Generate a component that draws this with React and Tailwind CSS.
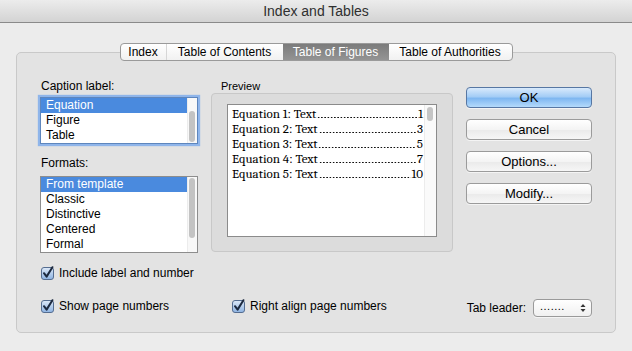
const CheckBox = () => (
  <svg width="14" height="14" viewBox="0 0 14 14" className="shrink-0">
    <defs>
      <linearGradient id="cbg" x1="0" y1="0" x2="0" y2="1">
        <stop offset="0" stopColor="#dde9f8" />
        <stop offset="1" stopColor="#8db3e2" />
      </linearGradient>
    </defs>
    <rect x="0.5" y="1.5" width="12" height="12" rx="2.5" fill="url(#cbg)" stroke="#556d90" />
    <path d="M3 7.2 L5.6 10.6 L11.4 1.2" fill="none" stroke="#1c2a40" strokeWidth="2" strokeLinecap="round" strokeLinejoin="round" />
  </svg>
);

const Check = ({ label }) => (
  <div className="flex items-center gap-[4px] text-[12px] text-black">
    <CheckBox />
    <span>{label}</span>
  </div>
);

const ListBox = ({ items, focus, height, thumbTop, thumbHeight }) => (
  <div
    className={`relative w-[158px] ${height} bg-white border overflow-hidden flex ${
      focus ? 'border-[#5e86bd] shadow-[0_0_1px_2px_#8fb5ea]' : 'border-[#8d8d8d]'
    }`}
  >
    <div className="flex-1 flex flex-col">
      {items.map((it, i) => (
        <div
          key={it}
          className={`h-[15px] leading-[15px] pl-[5px] text-[12px] ${
            i === 0 ? 'bg-[#4a8ade] text-white' : 'text-black'
          }`}
        >
          {it}
        </div>
      ))}
    </div>
    <div className="w-[10px] border-l border-[#ececec] bg-[#f8f8f8] relative">
      <div className={`absolute left-[1px] w-[6px] rounded-full bg-[#c3c3c3] ${thumbTop} ${thumbHeight}`} />
    </div>
  </div>
);

const Button = ({ label, primary }) => (
  <div
    className={`h-[21px] w-[126px] rounded-[4px] border flex items-center justify-center text-[13px] text-black shadow-[0_1px_0_rgba(255,255,255,0.6)] ${
      primary
        ? 'border-[#5777a3] bg-[linear-gradient(to_bottom,#d9eafc,#a4cdf6_45%,#7fb7f1_55%,#b4dafb)]'
        : 'border-[#9b9b9b] bg-[linear-gradient(to_bottom,#ffffff,#f4f4f4_50%,#ebebeb_55%,#f6f6f6)]'
    }`}
  >
    {label}
  </div>
);

const previewRows = [
  ['Equation 1: Text', '1'],
  ['Equation 2: Text', '3'],
  ['Equation 3: Text', '5'],
  ['Equation 4: Text', '7'],
  ['Equation 5: Text', '10'],
];

export default function App() {
  return (
    <div
      className="w-[632px] h-[351px] bg-[#ececec] overflow-hidden"
      style={{ fontFamily: '"Lucida Grande", "Liberation Sans", Arial, sans-serif' }}
    >
      {/* title bar */}
      <div className="h-[23px] border-b border-[#8a8a8a] bg-[linear-gradient(to_bottom,#ececec,#d3d3d3)] flex items-center justify-center text-[14px] text-[#2f2f2f]">
        Index and Tables
      </div>

      <div className="px-[16px] pt-[20px]">
        {/* tabs */}
        <div className="relative z-10 flex justify-center mb-[-9px]">
          <div className="flex h-[18px] rounded-[4px] border border-[#9a9a9a] bg-[linear-gradient(to_bottom,#ffffff,#f1f1f1)] overflow-hidden text-[12px] text-black">
            <div className="w-[46px] flex items-center justify-center border-r border-[#d6d6d6]">Index</div>
            <div className="w-[116px] flex items-center justify-center">Table of Contents</div>
            <div className="w-[106px] flex items-center justify-center text-white bg-[linear-gradient(to_bottom,#7c7c7c,#949494)]">
              Table of Figures
            </div>
            <div className="w-[123px] flex items-center justify-center">Table of Authorities</div>
          </div>
        </div>

        {/* panel */}
        <div className="h-[281px] rounded-[5px] border border-[#c9c9c9] bg-[#e3e3e3] pt-[26px] pl-[23px] pr-[23px]">
          <div className="flex gap-[13px]">
            {/* left column */}
            <div className="w-[158px] flex flex-col">
              <div className="h-[15px] leading-[15px] pl-[1px] text-[12px] text-black">Caption label:</div>
              <div className="mt-[3px]">
                <ListBox
                  items={['Equation', 'Figure', 'Table']}
                  focus
                  height="h-[47px]"
                  thumbTop="top-[13px]"
                  thumbHeight="h-[31px]"
                />
              </div>
              <div className="mt-[12px] h-[15px] leading-[15px] pl-[1px] text-[12px] text-black">Formats:</div>
              <div className="mt-[5px]">
                <ListBox
                  items={['From template', 'Classic', 'Distinctive', 'Centered', 'Formal']}
                  height="h-[77px]"
                  thumbTop="top-[1px]"
                  thumbHeight="h-[60px]"
                />
              </div>
              <div className="mt-[12px] h-[16px] flex items-center pl-[1px]">
                <Check label="Include label and number" />
              </div>
            </div>

            {/* preview */}
            <div className="w-[242px] flex flex-col">
              <div className="h-[14px] leading-[14px] pl-[10px] text-[11px] text-black">Preview</div>
              <div className="h-[159px] rounded-[4px] border border-[#c8c8c8] bg-[#dcdcdc] pt-[10px] px-[15px]">
                <div className="h-[133px] bg-white border border-[#8b8b8b] flex">
                  <div
                    className="flex-1 min-w-0 pl-[4px] pt-[1px] text-[13px] text-black"
                    style={{ fontFamily: 'Cambria, "Liberation Serif", "Times New Roman", serif' }}
                  >
                    {previewRows.map(([t, n]) => (
                      <div key={t} className="flex h-[15px] leading-[15px]">
                        <span className="whitespace-nowrap shrink-0">{t}</span>
                        <span className="flex-1 mx-[1px] bg-[radial-gradient(circle,#111_0.75px,transparent_1px)] bg-[length:3.25px_3px] bg-repeat-x bg-[position:0_10px]" />
                        <span className="shrink-0">{n}</span>
                      </div>
                    ))}
                  </div>
                  <div className="w-[12px] ml-[1px] border-l border-[#ececec] bg-[#fafafa] relative">
                    <div className="absolute left-[2px] top-[2px] w-[6px] h-[14px] rounded-full bg-[#c5c5c5]" />
                  </div>
                </div>
              </div>
            </div>

            {/* buttons */}
            <div className="flex flex-col gap-[11px] mt-[8px]">
              <Button label="OK" primary />
              <Button label="Cancel" />
              <Button label="Options..." />
              <Button label="Modify..." />
            </div>
          </div>

          {/* bottom row */}
          <div className="mt-[16px] h-[18px] flex items-center pl-[1px]">
            <div className="w-[191px]">
              <Check label="Show page numbers" />
            </div>
            <Check label="Right align page numbers" />
            <div className="ml-auto flex items-center gap-[7px] mt-[3px]">
              <span className="text-[12px] text-black">Tab leader:</span>
              <div className="w-[59px] h-[18px] rounded-[4px] border border-[#9a9a9a] bg-[linear-gradient(to_bottom,#ffffff,#f0f0f0)] flex items-center justify-between pl-[6px] pr-[5px] shadow-[0_1px_0_rgba(255,255,255,0.6)]">
                <span className="text-[11px] leading-none text-black -mt-[3px] tracking-[0.5px]">.......</span>
                <svg width="6" height="10" viewBox="0 0 6 10">
                  <path d="M0.5 4 L3 1 L5.5 4 Z" fill="#333" />
                  <path d="M0.5 6 L3 9 L5.5 6 Z" fill="#333" />
                </svg>
              </div>
            </div>
          </div>
        </div>
      </div>
    </div>
  );
}
